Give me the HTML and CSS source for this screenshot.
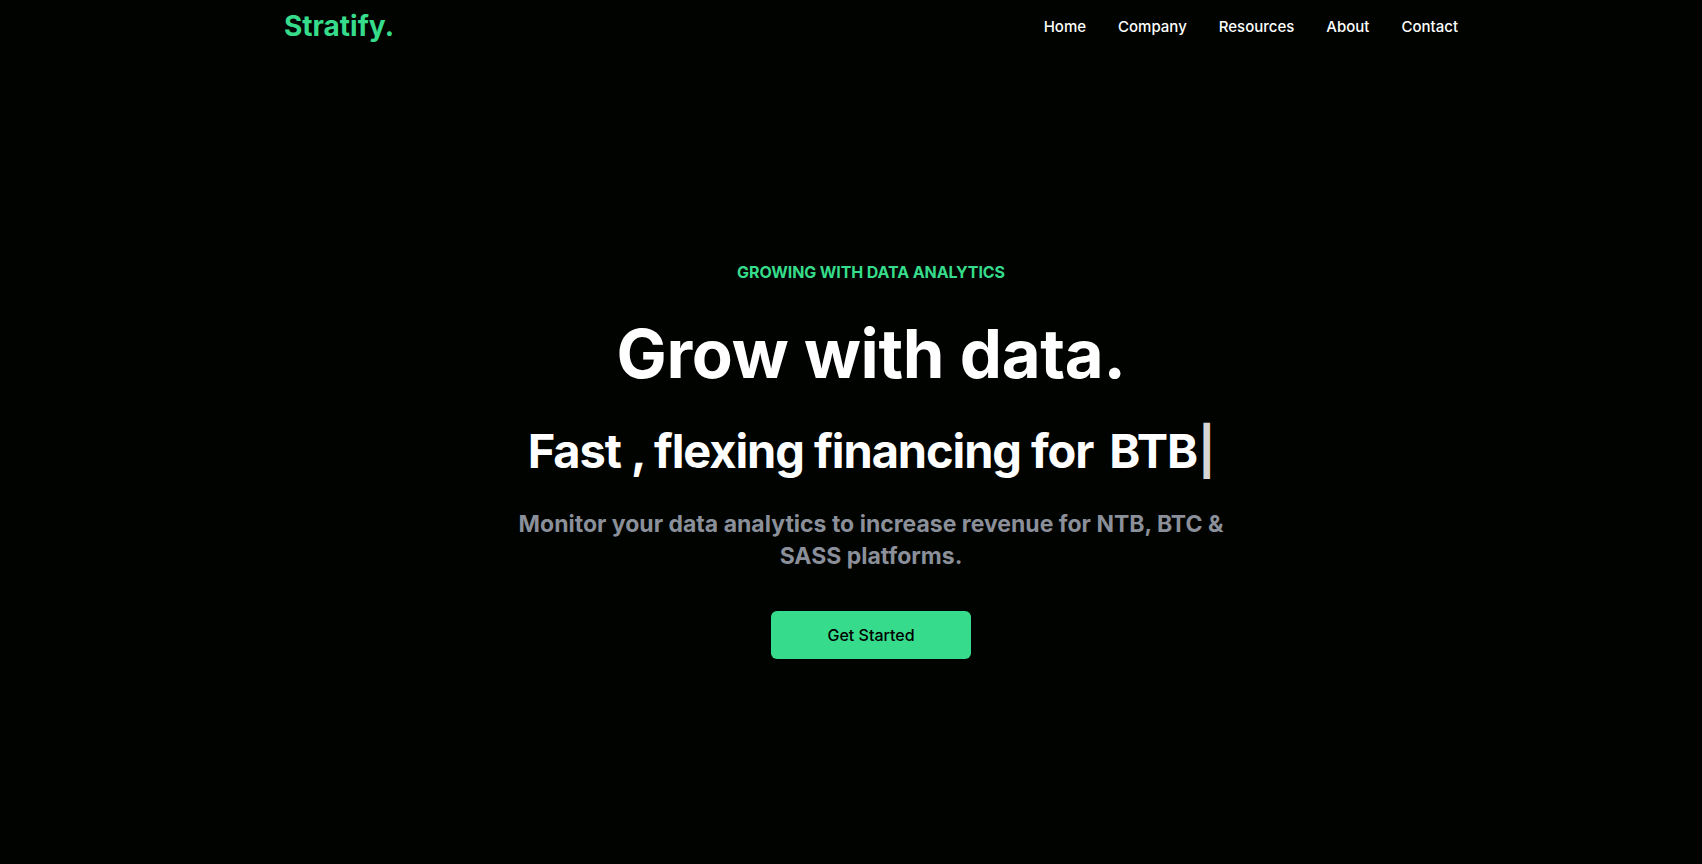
FILE: index.html
```html
<!DOCTYPE html>
<html lang="en">
<head>
<meta charset="utf-8">
<title>Stratify.</title>
<link rel="stylesheet" href="styles.css">
</head>
<body>
<div class="page">
  <nav class="nav">
    <h1 class="logo">Stratify.</h1>
    <ul class="menu">
      <li>Home</li>
      <li>Company</li>
      <li>Resources</li>
      <li>About</li>
      <li>Contact</li>
    </ul>
  </nav>
  <main class="hero">
    <p class="tagline">GROWING WITH DATA ANALYTICS</p>
    <h2 class="title">Grow with data.</h2>
    <div class="sub">
      <span>Fast , flexing financing for</span>
      <span class="typed">BTB<span class="cursor">|</span></span>
    </div>
    <p class="desc">Monitor your data analytics to increase revenue for NTB, BTC &amp; SASS platforms.</p>
    <button class="cta">Get Started</button>
  </main>
</div>
</body>
</html>
```
FILE: styles.css
```css
* { box-sizing: border-box; }
html, body { margin: 0; padding: 0; }
body {
  background: #000300;
  color: #ffffff;
  font-family: Inter, "Noto Sans", sans-serif;
  height: 864px;
  overflow: hidden;
}
.page {
  padding-left: 40px;
}
.nav {
  max-width: 1174px;
  height: 51px;
  margin: 0 auto;
  display: flex;
  justify-content: space-between;
  align-items: center;
}
.logo {
  margin: 0;
  font-size: 28px;
  line-height: 36px;
  font-weight: 700;
  color: #36dc8b;
  letter-spacing: 0;
}
.menu {
  list-style: none;
  margin: 0;
  padding: 2px 0 0;
  display: flex;
  gap: 32px;
  font-size: 15px;
  line-height: 24px;
  font-weight: 500;
}
.hero {
  max-width: 800px;
  margin: 0 auto;
  padding-top: 211px;
  display: flex;
  flex-direction: column;
  align-items: center;
  text-align: center;
}
.tagline {
  margin: 0;
  font-size: 16px;
  line-height: 20px;
  font-weight: 700;
  color: #36dc8b;
  letter-spacing: -0.1px;
}
.title {
  margin: 40px 0 0;
  font-size: 67px;
  line-height: 64px;
  font-weight: 700;
  letter-spacing: -0.3px;
}
.sub {
  margin-top: 41px;
  display: flex;
  gap: 16px;
  font-size: 47px;
  line-height: 48px;
  font-weight: 700;
  letter-spacing: -1.1px;
}
.cursor {
  color: #d6d6d6;
  font-weight: 700;
  margin-left: 1px;
}
.desc {
  margin: 33px 0 0;
  width: 740px;
  font-size: 23px;
  line-height: 32px;
  font-weight: 700;
  color: #8a8f99;
}
.cta {
  margin-top: 39px;
  width: 200px;
  height: 48px;
  border: 0;
  border-radius: 6px;
  background: #36dc8b;
  color: #000000;
  font-family: inherit;
  font-size: 16px;
  font-weight: 500;
}
```
